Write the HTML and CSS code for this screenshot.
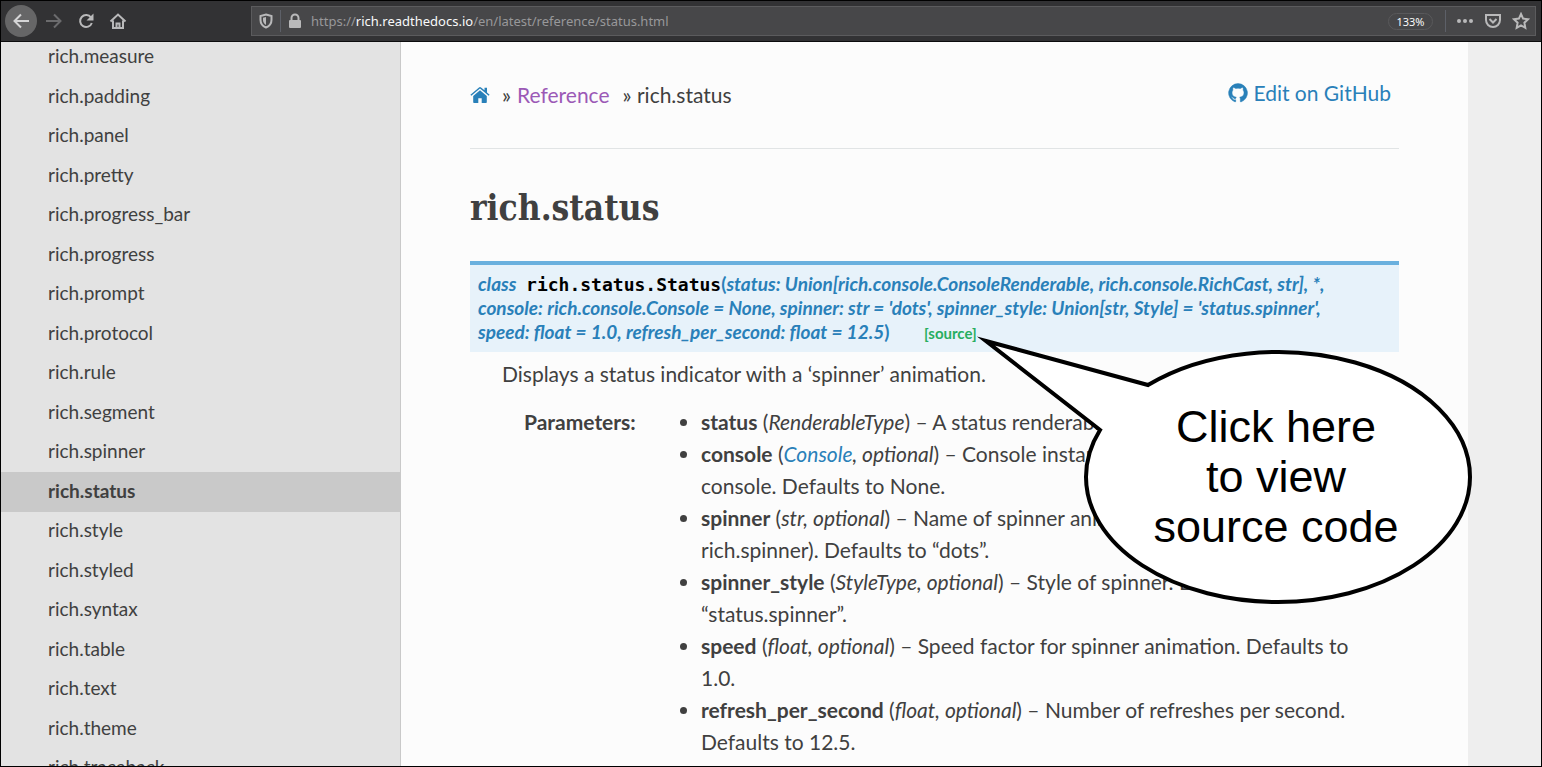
FILE: index.html
```html
<!DOCTYPE html>
<html lang="en">
<head>
<meta charset="utf-8">
<title>rich.status</title>
<link rel="stylesheet" href="styles.css">
</head>
<body>
<div class="window">
  <header class="toolbar">
    <div class="nav-buttons">
      <button class="tool back" aria-label="Back"><svg width="18" height="18" viewBox="0 0 18 18"><path d="M17 9H2.500M9 2.500 2.500 9 9 15.500" /></svg></button>
      <button class="tool disabled" aria-label="Forward" disabled><svg width="18" height="18" viewBox="0 0 18 18"><path d="M1 9h14.500M9 2.500 15.500 9 9 15.500" /></svg></button>
      <button class="tool" aria-label="Reload"><svg width="18" height="18" viewBox="0 0 18 18"><path d="M14 5.500A6 6 0 1 0 14.800 11" /><path class="solid" d="M16.500 1.500v7h-7z" /></svg></button>
      <button class="tool" aria-label="Home"><svg width="18" height="18" viewBox="0 0 18 18"><path d="M1.500 9.500 9 2.500l7.500 7M4 8.500v7.500h10V8.500" /><path d="M7.500 16v-4.500h3V16" /></svg></button>
    </div>
    <div class="address">
      <svg class="shield" width="16" height="16" viewBox="0 0 16 16"><path d="M8 1.500 13.500 3v4c0 3.500-2 6-5.500 7.500C4.500 13 2.500 10.500 2.500 7V3z" /><path class="solid" d="M8 4v8C6 10.800 5 9 5 7V4.800z" /></svg>
      <span class="divider"></span>
      <svg class="lock" width="16" height="16" viewBox="0 0 16 16"><path d="M4.500 8V5a3.500 3.500 0 0 1 7 0v3" /><rect class="solid" x="2" y="7" width="12" height="8" rx="1" /></svg>
      <span class="url">https://<b>rich.readthedocs.io</b>/en/latest/reference/status.html</span>
      <button class="zoom">133%</button>
      <span class="divider"></span>
      <button class="page-action" aria-label="Page actions"><svg width="18" height="18" viewBox="0 0 18 18"><g class="solid"><circle cx="3" cy="9" r="2" /><circle cx="9" cy="9" r="2" /><circle cx="15" cy="9" r="2" /></g></svg></button>
      <button class="page-action" aria-label="Save to Pocket"><svg width="18" height="18" viewBox="0 0 18 18"><path d="M2 3h14v5a7 7 0 0 1-14 0zM5.500 7 9 10.500 12.500 7" /></svg></button>
      <button class="page-action" aria-label="Bookmark"><svg width="18" height="18" viewBox="0 0 18 18"><path d="m9 2 2.100 4.600 4.900.600-3.600 3.500.900 5.100L9 13.300l-4.300 2.500.900-5.100L2 7.200l4.900-.600z" /></svg></button>
    </div>
  </header>

  <div class="viewport">
    <nav class="sidebar" aria-label="Reference">
      <ul>
        <li><a href="#">rich.measure</a></li>
        <li><a href="#">rich.padding</a></li>
        <li><a href="#">rich.panel</a></li>
        <li><a href="#">rich.pretty</a></li>
        <li><a href="#">rich.progress_bar</a></li>
        <li><a href="#">rich.progress</a></li>
        <li><a href="#">rich.prompt</a></li>
        <li><a href="#">rich.protocol</a></li>
        <li><a href="#">rich.rule</a></li>
        <li><a href="#">rich.segment</a></li>
        <li><a href="#">rich.spinner</a></li>
        <li><a class="current" href="#" aria-current="page">rich.status</a></li>
        <li><a href="#">rich.style</a></li>
        <li><a href="#">rich.styled</a></li>
        <li><a href="#">rich.syntax</a></li>
        <li><a href="#">rich.table</a></li>
        <li><a href="#">rich.text</a></li>
        <li><a href="#">rich.theme</a></li>
        <li><a href="#">rich.traceback</a></li>
      </ul>
    </nav>

    <main class="content">
      <div class="crumbs">
        <div class="trail">
          <a class="home" href="#" aria-label="Docs"><svg width="20" height="16" viewBox="0 0 20 16"><path d="M10 3.300 3.200 9v6.200c0 .400.300.800.800.800h4.300v-4.700h3.400V16H16c.500 0 .800-.400.800-.800V9z" /><path d="M19.600 7.700 17 5.500V.800h-2.500v2.500L11 .400a1.600 1.600 0 0 0-2 0L.400 7.700l.900 1L10 1.500l8.700 7.200z" /></svg></a>
          <span>»</span>
          <a class="visited" href="#">Reference</a>
          <span class="last">» rich.status</span>
        </div>
        <a class="edit" href="#"><svg width="20" height="20" viewBox="0 0 16 16" stroke="currentColor" stroke-width=".4"><path d="M8 .500a7.500 7.500 0 0 0-2.370 14.620c.370.070.510-.160.510-.360v-1.270c-2.090.450-2.530-1.010-2.530-1.010-.340-.870-.830-1.100-.830-1.100-.680-.470.050-.460.050-.460.750.050 1.150.770 1.150.770.670 1.150 1.760.820 2.190.630.070-.490.260-.820.480-1-1.670-.190-3.420-.830-3.420-3.710 0-.820.290-1.490.770-2.010-.080-.190-.330-.960.070-1.990 0 0 .630-.200 2.060.770a7.200 7.200 0 0 1 3.760 0c1.430-.970 2.060-.770 2.060-.770.400 1.030.150 1.800.070 1.990.480.520.770 1.190.770 2.010 0 2.890-1.760 3.520-3.430 3.710.270.230.510.690.510 1.390v2.060c0 .200.140.430.520.360A7.500 7.500 0 0 0 8 .500z" /></svg>Edit on GitHub</a>
      </div>

      <h1>rich.status</h1>

      <dl class="class-doc">
        <dt class="signature"><em>class</em> <code>rich.status.Status</code>(<em>status: Union[rich.console.ConsoleRenderable, rich.console.RichCast, str], *, console: rich.console.Console = None, spinner: str = 'dots', spinner_style: Union[str, Style] = 'status.spinner', speed: float = 1.0, refresh_per_second: float = 12.5</em>) <a class="source" href="#">[source]</a></dt>
        <dd>
          <p>Displays a status indicator with a ‘spinner’ animation.</p>
          <dl class="fields">
            <dt>Parameters:</dt>
            <dd>
              <ul>
                <li><strong>status</strong> (<em>RenderableType</em>) – A status renderable (str or Text typically).</li>
                <li><strong>console</strong> (<a href="#"><em>Console</em></a><em>, optional</em>) – Console instance to use, or None for global console. Defaults to None.</li>
                <li><strong>spinner</strong> (<em>str, optional</em>) – Name of spinner animation (see python -m rich.spinner). Defaults to “dots”.</li>
                <li><strong>spinner_style</strong> (<em>StyleType, optional</em>) – Style of spinner. Defaults to “status.spinner”.</li>
                <li><strong>speed</strong> (<em>float, optional</em>) – Speed factor for spinner animation. Defaults to 1.0.</li>
                <li><strong>refresh_per_second</strong> (<em>float, optional</em>) – Number of refreshes per second. Defaults to 12.5.</li>
              </ul>
            </dd>
          </dl>
        </dd>
      </dl>

      <aside class="callout">
        <svg width="492" height="268" viewBox="0 0 492 268"><path d="M4 2 166 46A192 125 0 0 1 488 138A192 125 0 0 1 296 263A192 125 0 0 1 104 138A192 125 0 0 1 118 91Z" /></svg>
        <p>Click here<br>to view<br>source code</p>
      </aside>
    </main>
  </div>
</div>
</body>
</html>
```
FILE: styles.css
```css
* {
  box-sizing: border-box;
}

body {
  margin: 0;
  color: #404040;
  font-family: Lato, "Liberation Sans", sans-serif;
  font-size: 21px;
  line-height: 32px;
}

a {
  color: #2980b9;
  text-decoration: none;
}

button {
  padding: 0;
  border: 0;
  background: none;
  color: inherit;
  font: inherit;
}

ul,
dl,
dd,
p {
  margin: 0;
  padding: 0;
}

.window {
  display: flex;
  flex-direction: column;
  height: 100vh;
  overflow: hidden;
  border: 1px solid #000;
}

/* Browser toolbar */

.toolbar {
  display: flex;
  flex: none;
  align-items: center;
  height: 41px;
  padding: 0 5px 0 4px;
  border-bottom: 1px solid #0c0c0d;
  background: #323234;
  color: #b9b9ba;
  font: 13px/20px "Noto Sans", "Open Sans", sans-serif;
}

.toolbar svg {
  display: block;
  fill: none;
  stroke: currentColor;
  stroke-width: 2;
}

.toolbar svg .solid {
  fill: currentColor;
  stroke: none;
}

.nav-buttons {
  display: flex;
  width: 246px;
}

.tool {
  display: grid;
  place-items: center;
  width: 32px;
  height: 32px;
}

.back {
  margin-right: 1px;
  border-radius: 50%;
  background: #666667;
  color: #d5d5d6;
}

.disabled {
  color: #6b6b6d;
}

.address {
  display: flex;
  flex: 1;
  align-items: center;
  height: 30px;
  padding: 0 5px 0 6px;
  border: 1px solid #5b5b5d;
  background: #474749;
}

.divider {
  width: 1px;
  height: 22px;
  background: #5d6068;
}

.shield {
  margin-right: 6px;
}

.lock {
  margin: 0 8px 0 6px;
}

.url {
  flex: 1;
  color: #98989a;
}

.url b {
  color: #f9f9fa;
  font-weight: 400;
}

.zoom {
  width: 45px;
  height: 17px;
  margin-right: 12px;
  border: 1px solid #59595b;
  border-radius: 9px;
  color: #f9f9fa;
  font-size: 11px;
  line-height: 15px;
}

.page-action {
  width: 18px;
  margin-left: 10px;
}

/* Page */

.viewport {
  display: flex;
  flex: 1;
  min-height: 0;
  background: #eee;
}

.sidebar {
  flex: none;
  width: 400px;
  overflow: hidden;
  border-right: 1px solid #c9c9c9;
  background: #e3e3e3;
  font-size: 19px;
}

.sidebar ul {
  margin-top: -4px;
  list-style: none;
}

.sidebar a {
  display: block;
  padding: 0 0 3px 47px;
  color: #404040;
  line-height: 36px;
}

.sidebar li:nth-child(even) a {
  line-height: 37px;
}

.sidebar .current {
  background: #c9c9c9;
  font-weight: 700;
}

.content {
  position: relative;
  flex: 1;
  max-width: 1067px;
  padding: 35px 69px 0;
  background: #fcfcfc;
}

.crumbs {
  display: flex;
  align-items: flex-start;
  justify-content: space-between;
  height: 72px;
  border-bottom: 1px solid #e1e4e5;
}

.trail {
  display: flex;
  gap: 6px;
  padding-top: 2px;
}

.home {
  margin-right: 6px;
}

.home svg,
.edit svg {
  fill: currentColor;
}

.visited {
  color: #9b59b6;
}

.last {
  margin-left: 7px;
}

.edit {
  display: flex;
  align-items: center;
  gap: 5px;
  margin-right: 8px;
}

h1 {
  margin: 34px 0 28px;
  font: 700 35px/50px "Roboto Slab", "DejaVu Serif Condensed", "DejaVu Serif", serif;
}

.signature {
  padding: 7px 40px 8px 8px;
  border-top: 4px solid #6ab0de;
  background: #e7f2fa;
  color: #2980b9;
  font-size: 19px;
  font-weight: 700;
  line-height: 24px;
}

.signature code {
  margin-left: 5px;
  color: #000;
  font-family: "DejaVu Sans Mono", monospace;
  font-size: 18px;
  line-height: 20px;
}

.source {
  margin-left: 30px;
  color: #27ae60;
  font-size: 15px;
  line-height: 20px;
}

.class-doc > dd {
  padding: 6px 0 0 32px;
}

.fields {
  display: grid;
  grid-template-columns: 177px 1fr;
  padding: 16px 16px 0 22px;
}

.fields dt {
  font-weight: 700;
}

/* Speech balloon over the page */

.callout {
  position: absolute;
  top: 297px;
  left: 581px;
  color: #000;
}

.callout svg {
  display: block;
  overflow: visible;
  fill: #fff;
  stroke: #000;
  stroke-width: 4;
  stroke-miterlimit: 10;
}

.callout p {
  position: absolute;
  top: 63px;
  left: 102px;
  width: 384px;
  font: 45px/50px "Liberation Sans", sans-serif;
  text-align: center;
}
```
